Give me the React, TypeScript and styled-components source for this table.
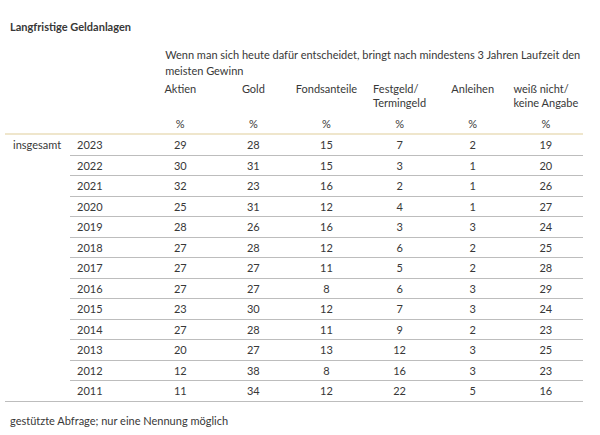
import React from "react"
import styled, { createGlobalStyle } from "styled-components"

const GlobalStyle = createGlobalStyle`
  html, body {
    margin: 0;
    padding: 0;
    background: #fff;
  }
  body {
    font-family: Lato, "Open Sans", sans-serif;
    color: #383838;
  }
`

type Row = { year: number; values: number[] }

const columns = ["Aktien", "Gold", "Fondsanteile", "Festgeld/\nTermingeld", "Anleihen", "weiß nicht/\nkeine Angabe"]

const rows: Row[] = [
  { year: 2023, values: [29, 28, 15, 7, 2, 19] },
  { year: 2022, values: [30, 31, 15, 3, 1, 20] },
  { year: 2021, values: [32, 23, 16, 2, 1, 26] },
  { year: 2020, values: [25, 31, 12, 4, 1, 27] },
  { year: 2019, values: [28, 26, 16, 3, 3, 24] },
  { year: 2018, values: [27, 28, 12, 6, 2, 25] },
  { year: 2017, values: [27, 27, 11, 5, 2, 28] },
  { year: 2016, values: [27, 27, 8, 6, 3, 29] },
  { year: 2015, values: [23, 30, 12, 7, 3, 24] },
  { year: 2014, values: [27, 28, 11, 9, 2, 23] },
  { year: 2013, values: [20, 27, 13, 12, 3, 25] },
  { year: 2012, values: [12, 38, 8, 16, 3, 23] },
  { year: 2011, values: [11, 34, 12, 22, 5, 16] },
]

export default function App() {
  return (
    <>
      <GlobalStyle />
      <S.Page>
        <S.Title>Langfristige Geldanlagen</S.Title>
        <S.Table>
          <colgroup>
            <col style={{ width: 65 }} />
            <col style={{ width: 73.5 }} />
            {columns.map((c) => (
              <col key={c} style={{ width: 73 }} />
            ))}
          </colgroup>
          <thead>
            <tr>
              <th colSpan={2} />
              <S.Question colSpan={6}>
                Wenn man sich heute dafür entscheidet, bringt nach mindestens 3 Jahren Laufzeit den
                <br />
                meisten Gewinn
              </S.Question>
            </tr>
            <tr>
              <th colSpan={2} />
              {columns.map((c) => (
                <S.ColHead key={c}>
                  <S.ColHeadText>
                    {c.split("\n").map((line, i) => (
                      <div key={i}>{line}</div>
                    ))}
                  </S.ColHeadText>
                </S.ColHead>
              ))}
            </tr>
            <tr>
              <S.UnitCell colSpan={2} />
              {columns.map((c) => (
                <S.UnitCell key={c}>%</S.UnitCell>
              ))}
            </tr>
          </thead>
          <tbody>
            {rows.map((r, i) => {
              const last = i === rows.length - 1
              return (
                <tr key={r.year}>
                  <S.Label $last={last}>{i === 0 ? "insgesamt" : ""}</S.Label>
                  <S.Year>{r.year}</S.Year>
                  {r.values.map((v, j) => (
                    <S.Value key={j}>{v}</S.Value>
                  ))}
                </tr>
              )
            })}
          </tbody>
        </S.Table>
        <S.Note>gestützte Abfrage; nur eine Nennung möglich</S.Note>
      </S.Page>
    </>
  )
}

const S = {
  Page: styled.div`
    width: 600px;
    height: 435px;
    padding: 20px 0 0 5px;
    box-sizing: border-box;
    font-size: 11px;
  `,
  Title: styled.div`
    font-weight: 700;
    font-size: 11px;
    line-height: 14px;
    padding-left: 5px;
    margin-bottom: 13px;
  `,
  Table: styled.table`
    border-collapse: collapse;
    table-layout: fixed;
    width: 577.5px;
    font-size: 11px;
  `,
  Question: styled.th`
    font-weight: 400;
    text-align: left;
    padding: 0 0 3px 21.5px;
    line-height: 16px;
  `,
  ColHead: styled.th`
    font-weight: 400;
    text-align: center;
    vertical-align: top;
    line-height: 14px;
    padding: 0 0 7px;
    height: 28px;
  `,
  ColHeadText: styled.div`
    display: inline-block;
    text-align: left;
  `,
  UnitCell: styled.td`
    text-align: center;
    line-height: 14px;
    padding: 0 0 2px;
    border-bottom: 2px solid #efe6cc;
  `,
  Label: styled.td<{ $last: boolean }>`
    padding: 0 0 0 8px;
    line-height: 19.5px;
    border-bottom: ${(p) => (p.$last ? "1px solid #bdbdbd" : "none")};
  `,
  Year: styled.td`
    padding: 0 0 0 7px;
    line-height: 19.5px;
    border-bottom: 1px solid #bdbdbd;
  `,
  Value: styled.td`
    text-align: center;
    line-height: 19.5px;
    padding: 0;
    border-bottom: 1px solid #bdbdbd;
  `,
  Note: styled.div`
    padding: 12px 0 0 5px;
    line-height: 14px;
  `,
}
